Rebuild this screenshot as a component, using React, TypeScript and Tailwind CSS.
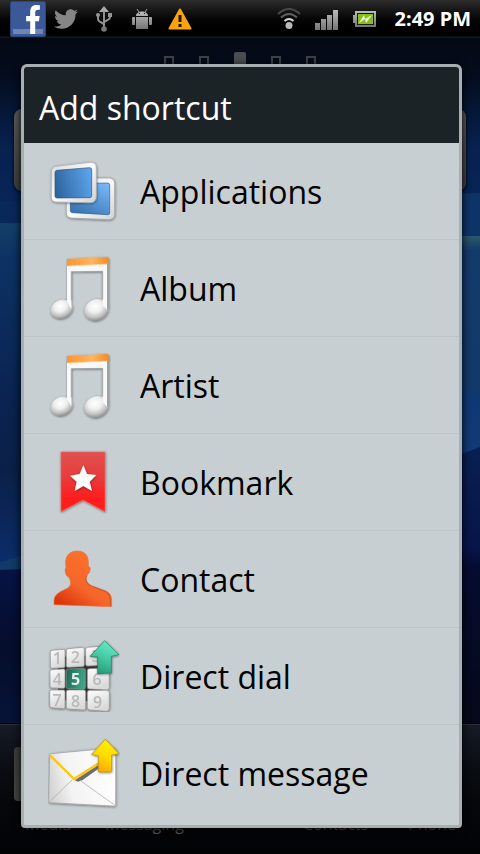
import type { ReactNode } from "react";
import { FaFacebookF, FaTwitter } from "react-icons/fa";

function Wallpaper() {
  return (
    <svg className="absolute inset-0 h-full w-full" viewBox="0 0 480 854" preserveAspectRatio="none" aria-hidden="true">
      <defs>
        <linearGradient id="sky" x1="0" y1="0" x2="0" y2="1">
          <stop offset="0" stopColor="#020509" />
          <stop offset="0.09" stopColor="#040d1e" />
          <stop offset="0.17" stopColor="#07214f" />
          <stop offset="0.26" stopColor="#08265a" />
        </linearGradient>
        <linearGradient id="band" x1="0" y1="0" x2="0" y2="1">
          <stop offset="0" stopColor="#143f66" />
          <stop offset="0.1" stopColor="#0c3264" />
          <stop offset="0.5" stopColor="#0a2350" />
          <stop offset="0.7" stopColor="#0a2048" />
          <stop offset="1" stopColor="#0a2f6e" />
        </linearGradient>
        <linearGradient id="bandRight" x1="0" y1="0" x2="0" y2="1">
          <stop offset="0" stopColor="#2c5868" />
          <stop offset="0.06" stopColor="#123a6c" />
          <stop offset="0.6" stopColor="#123968" />
          <stop offset="0.7" stopColor="#0e3875" />
          <stop offset="1" stopColor="#153a72" />
        </linearGradient>
        <linearGradient id="deep" x1="0" y1="0" x2="0" y2="1">
          <stop offset="0" stopColor="#07164c" />
          <stop offset="0.35" stopColor="#061242" />
          <stop offset="0.65" stopColor="#050e2b" />
          <stop offset="1" stopColor="#06133a" />
        </linearGradient>
        <linearGradient id="deepRight" x1="0" y1="0" x2="0" y2="1">
          <stop offset="0" stopColor="#082052" />
          <stop offset="0.36" stopColor="#08144a" />
          <stop offset="0.42" stopColor="#060c30" />
          <stop offset="1" stopColor="#050818" />
        </linearGradient>
      </defs>
      <rect width="480" height="854" fill="url(#sky)" />
      <path d="M0 201l240 3v30H0z" fill="#09285a" />
      <path d="M0 223l240 3v350H0z" fill="url(#band)" />
      <path d="M240 200l240-7v45H240z" fill="#0c3468" />
      <path d="M240 236h240v240H240z" fill="url(#bandRight)" />
      <path d="M0 562q10-2 30-10l210-60v100H0z" fill="#113a68" />
      <path d="M0 570l24-1q100-8 216-70v230H0z" fill="url(#deep)" />
      <path d="M240 500q130-8 240-53v283H240z" fill="url(#deepRight)" />
    </svg>
  );
}

function HomeScreen() {
  return (
    <div className="absolute inset-0 overflow-hidden" aria-hidden="true">
      <Wallpaper />
      <div className="absolute inset-x-0 top-[52px] flex h-6 justify-center gap-[25px]">
        <span className="mt-1 w-[10px] border-2 border-[#3e4144]" />
        <span className="mt-1 w-[10px] border-2 border-[#3e4144]" />
        <span className="w-3 rounded-t-xs bg-[#4b4d50]" />
        <span className="mt-1 w-[10px] border-2 border-[#3e4144]" />
        <span className="mt-1 w-[10px] border-2 border-[#3e4144]" />
      </div>
      <div className="absolute inset-x-[14px] top-[109px] h-[82px] rounded-lg bg-linear-to-b from-[#5a5a5a] to-[#3f3f3f] shadow-[0_1px_3px_#000]" />
      <div className="absolute inset-x-0 bottom-0 h-[131px] border-t border-black bg-linear-to-b from-[#161b26] via-[#080b0f] via-40% to-[#020305]">
        <div className="h-px bg-[#2d3034]" />
        <div className="absolute top-[23px] left-[14px] h-[54px] w-12 rounded-sm bg-linear-to-b from-[#3d3d3d] to-[#454545]" />
        <div className="absolute inset-x-0 top-[88px] flex pr-6 pl-[25px] text-base leading-6 text-[#606366]">
          <span>Media</span>
          <span className="ml-[34px]">Messaging</span>
          <span className="ml-auto">Contacts</span>
          <span className="ml-10">Phone</span>
        </div>
      </div>
    </div>
  );
}

function Slot({ children }: { children: ReactNode }) {
  return <span className="flex w-[38px] shrink-0 items-center justify-center">{children}</span>;
}

function StatusBar() {
  return (
    <header className="relative flex h-[38px] items-center bg-linear-to-b from-[#2c2c2c] via-black via-88% to-[#1d1d1d] px-[9px]">
      <svg width="0" height="0" className="absolute" aria-hidden="true">
        <defs>
          <linearGradient id="grey" x1="0" y1="0" x2="0" y2="1">
            <stop offset="0" stopColor="#bcbcbc" />
            <stop offset="1" stopColor="#747474" />
          </linearGradient>
        </defs>
      </svg>
      <Slot>
        <span className="relative flex size-9 items-end justify-end rounded-xs border border-[#2d4679] bg-[#3b5998] pr-1 pb-[2px]">
          <span className="absolute inset-x-[2px] bottom-[2px] h-[5px] bg-[#6d84b4]" />
          <FaFacebookF className="relative h-[29px] w-[16px] text-white" preserveAspectRatio="none" />
        </span>
      </Slot>
      <Slot>
        <FaTwitter className="size-6 text-[#858585]" />
      </Slot>
      <Slot>
        <svg width="24" height="26" viewBox="0 0 24 26">
          <path d="M12 0l5 6H7z" fill="#a8a8a8" />
          <path d="M12 5v17M12 19c0-3-6-2-6-6V9M12 17c0-3 6-2 6-6V8" fill="none" stroke="#8f8f8f" strokeWidth="2" />
          <circle cx="6" cy="9" r="2" fill="#969696" />
          <path d="M16 7h4v4h-4z" fill="#969696" />
          <circle cx="12" cy="23" r="2.8" fill="#777" />
        </svg>
      </Slot>
      <Slot>
        <svg width="20" height="20" viewBox="0 0 20 20">
          <path d="M4 7C4 1 16 1 16 7z M4 8h12v12H4z M0 9q0-1 1-1h2v8H1q-1 0-1-1z M17 8h2q1 0 1 1v6q0 1-1 1h-2z" fill="url(#grey)" />
          <path d="M5 0l2 3M15 0l-2 3" stroke="#a5a5a5" strokeWidth="1" />
          <path d="M7 4h1v1H7z M12 4h1v1h-1z" fill="#111" />
        </svg>
      </Slot>
      <Slot>
        <svg width="24" height="22" viewBox="0 0 24 22">
          <path d="M12 1.500L22.500 20.500H1.500z" fill="#ffa30c" stroke="#ffa30c" strokeWidth="2" strokeLinejoin="round" />
          <path d="M10.500 7h3v7h-3z M10.500 16h3v3h-3z" fill="#1a1a1a" />
        </svg>
      </Slot>
      <span className="grow" />
      <Slot>
        <svg width="24" height="22" viewBox="0 0 24 22" fill="none">
          <path d="M1 6q11-10 22 0" stroke="#484848" strokeWidth="2" />
          <path d="M4 9.500q8-7 16 0" stroke="#606060" strokeWidth="2" />
          <path d="M7.500 13q4.500-4 9 0" stroke="#d8d8d8" strokeWidth="2" />
          <circle cx="12" cy="17.500" r="3.500" fill="#b8b8b8" />
        </svg>
      </Slot>
      <Slot>
        <svg width="24" height="22" viewBox="0 0 24 22">
          <path d="M0 15h5v7H0z M6 11h5v11H6z M12 7h5v15h-5z M18 2h5v20h-5z" fill="url(#grey)" />
        </svg>
      </Slot>
      <Slot>
        <svg width="24" height="16" viewBox="0 0 24 16">
          <path d="M0 4h3v8H0z M2 0h21v16H2z" fill="url(#grey)" />
          <path d="M4 2h17v12H4z" fill="#171d0c" />
          <path d="M5 3h15v10H5z" fill="#86bd1d" />
          <path d="M6 12l5-8 1 4 7-4-6 8-1-4z" fill="#eff8d8" />
        </svg>
      </Slot>
      <time className="ml-[11px] font-['Noto_Sans',sans-serif] text-xl leading-6 font-bold whitespace-nowrap text-white">2:49 PM</time>
    </header>
  );
}

function Icon({ children }: { children: ReactNode }) {
  return (
    <svg className="size-[72px] shrink-0" viewBox="0 0 216 216" aria-hidden="true">
      {children}
    </svg>
  );
}

function IconDefs() {
  return (
    <svg width="0" height="0" className="absolute" aria-hidden="true">
      <defs>
        <filter id="shade" x="-20%" y="-20%" width="140%" height="140%">
          <feDropShadow dx="1" dy="2" stdDeviation="3" floodColor="#000" floodOpacity="0.5" />
        </filter>
        <linearGradient id="frame" x1="0" y1="0" x2="1" y2="1">
          <stop offset="0" stopColor="#dadada" />
          <stop offset="0.5" stopColor="#fafafa" />
          <stop offset="1" stopColor="#d2d2d2" />
        </linearGradient>
        <linearGradient id="screenFront" x1="0" y1="0.6" x2="1" y2="0.4">
          <stop offset="0" stopColor="#2f659f" />
          <stop offset="1" stopColor="#5ba3ec" />
        </linearGradient>
        <linearGradient id="screenBack" x1="0.9" y1="0" x2="0.2" y2="1">
          <stop offset="0" stopColor="#78b9fb" />
          <stop offset="1" stopColor="#3872af" />
        </linearGradient>
        <linearGradient id="orangeBar" x1="0" y1="0" x2="1" y2="0">
          <stop offset="0" stopColor="#ff9430" />
          <stop offset="0.6" stopColor="#ffb45f" />
          <stop offset="1" stopColor="#f08d28" />
        </linearGradient>
        <radialGradient id="ball" cx="0.5" cy="0.32" r="0.7">
          <stop offset="0" stopColor="#fff" />
          <stop offset="0.4" stopColor="#efefef" />
          <stop offset="0.75" stopColor="#bdbdbd" />
          <stop offset="1" stopColor="#858585" />
        </radialGradient>
        <linearGradient id="ribbon" x1="0" y1="0" x2="0" y2="1">
          <stop offset="0" stopColor="#e0504f" />
          <stop offset="0.45" stopColor="#ea3a3a" />
          <stop offset="0.8" stopColor="#ff1b1b" />
          <stop offset="1" stopColor="#ff2222" />
        </linearGradient>
        <linearGradient id="person" x1="0.7" y1="0.3" x2="0.2" y2="1">
          <stop offset="0" stopColor="#fb6e2c" />
          <stop offset="0.5" stopColor="#f5652a" />
          <stop offset="1" stopColor="#dc3208" />
        </linearGradient>
        <linearGradient id="key" x1="0" y1="0" x2="0.4" y2="1">
          <stop offset="0" stopColor="#fdfdfd" />
          <stop offset="1" stopColor="#d9d9d9" />
        </linearGradient>
        <linearGradient id="greenKey" x1="0" y1="0.4" x2="1" y2="0.6">
          <stop offset="0" stopColor="#1d6d58" />
          <stop offset="1" stopColor="#41a88a" />
        </linearGradient>
        <linearGradient id="greenArrow" x1="0.7" y1="0" x2="0.3" y2="1">
          <stop offset="0" stopColor="#64efc8" />
          <stop offset="0.5" stopColor="#48c9a5" />
          <stop offset="1" stopColor="#239a78" />
        </linearGradient>
        <linearGradient id="yellowArrow" x1="0.7" y1="0" x2="0.3" y2="1">
          <stop offset="0" stopColor="#fff000" />
          <stop offset="0.5" stopColor="#ffdc00" />
          <stop offset="1" stopColor="#f7a600" />
        </linearGradient>
        <linearGradient id="paper" x1="0" y1="0.6" x2="1" y2="0.4">
          <stop offset="0" stopColor="#d3d3d3" />
          <stop offset="0.3" stopColor="#f3f3f3" />
          <stop offset="1" stopColor="#fff" />
        </linearGradient>
      </defs>
    </svg>
  );
}

function ApplicationsIcon() {
  return (
    <Icon>
      <path d="M70 69L184 69Q200 71 200 87V178Q199 194 182 194L70 189Q55 187 55 173V84Q55 70 70 69Z" fill="url(#frame)" stroke="#959b9e" strokeWidth="2" filter="url(#shade)" />
      <path d="M67 86L179 84Q185 84 185 90V174Q185 179 179 179L73 173Q67 172 67 167Z" fill="url(#screenBack)" stroke="#2e5c8c" strokeWidth="2" />
      <path d="M24 34L126 22Q144 21 145 38V126Q144 142 128 143L24 141Q10 140 10 126V51Q10 36 24 34Z" fill="url(#frame)" stroke="#a5a9ab" strokeWidth="2" filter="url(#shade)" />
      <path d="M26 46L125 38Q131 38 131 44V122Q131 128 125 128L27 129Q21 129 21 123V53Q21 47 26 46Z" fill="url(#screenFront)" stroke="#2b4e72" strokeWidth="2" />
    </Icon>
  );
}

function NoteIcon() {
  return (
    <Icon>
      <g filter="url(#shade)">
        <ellipse cx="41" cy="172" rx="34" ry="28" fill="url(#ball)" transform="rotate(-22 41 172)" />
        <ellipse cx="145" cy="174" rx="37" ry="32" fill="url(#ball)" transform="rotate(-20 145 174)" />
        <path d="M57 40L180 34V176L164 160V58L70 59V172L57 150Z" fill="#f9f9f9" />
        <path d="M177 18L182 20V168L177 178Z" fill="#9da1a3" />
        <path d="M57 21L178 15L182 19V36L57 42Z" fill="url(#orangeBar)" />
        <path d="M57 42L178 36" stroke="#ffd091" strokeWidth="2" />
        <path d="M70 145V59L164 58V142" fill="none" stroke="#8f9496" strokeWidth="2" />
      </g>
    </Icon>
  );
}

function BookmarkIcon() {
  return (
    <Icon>
      <path d="M39 18H171V197L105 162L39 197Z" fill="url(#ribbon)" stroke="#f06a5c" strokeWidth="2" filter="url(#shade)" />
      <path d="M106 57L117 84L145 87L125 107L132 135L106 120L80 135L86 107L66 89L95 84Z" fill="#fdfdfd" filter="url(#shade)" />
    </Icon>
  );
}

function ContactIcon() {
  return (
    <Icon>
      <path d="M88 24C66 24 52 38 53 60L54 74Q49 78 53 92Q55 101 62 102Q68 110 68 121Q68 132 54 138C36 146 18 154 18 174V185L191 191V168Q190 151 174 144L130 128Q114 120 114 104Q117 99 119 94Q126 92 127 76Q126 70 121 71V54C120 34 106 24 88 24Z" fill="url(#person)" stroke="#e27545" strokeWidth="2" />
      <path d="M115 98Q109 120 130 129L172 145Q188 151 188 188" fill="none" stroke="#a94b24" strokeWidth="2" />
    </Icon>
  );
}

const keys = [
  { d: "M12 31L46 28Q51 28 51 33V78Q51 83 46 83L12 85Q7 85 7 80V36Q7 31 12 31Z", n: "1", x: 28, y: 73 },
  { d: "M61 26L103 22Q109 22 109 28V74Q109 80 103 80L61 82Q55 82 55 77V32Q55 27 61 26Z", n: "2", x: 82, y: 69 },
  { d: "M119 22L166 18Q174 18 174 26V68Q174 76 166 76L119 78Q113 78 113 72V28Q113 23 119 22Z", n: "3", x: 144, y: 66 },
  { d: "M12 89L46 87Q51 87 51 92V140Q51 145 46 145L12 144Q6 144 6 139V94Q6 89 12 89Z", n: "4", x: 28, y: 134 },
  { d: "M61 87L106 85Q112 85 112 91V142Q112 148 106 148L61 146Q55 146 55 140V93Q55 87 61 87Z", n: "5", x: 83, y: 134 },
  { d: "M124 86L176 84Q184 84 184 92V142Q184 150 176 150L124 147Q118 147 118 141V92Q118 86 124 86Z", n: "6", x: 147, y: 135 },
  { d: "M11 150H46Q51 150 51 155V201Q51 206 46 206L11 203Q5 202 5 197V155Q5 150 11 150Z", n: "7", x: 27, y: 197 },
  { d: "M61 150H107Q113 150 113 156V204Q113 210 107 210L61 207Q55 206 55 201V156Q55 150 61 150Z", n: "8", x: 83, y: 201 },
  { d: "M125 151H176Q184 151 184 159V205Q183 214 175 214L125 210Q118 209 118 203V158Q118 151 125 151Z", n: "9", x: 149, y: 204 },
];

function DialIcon() {
  return (
    <Icon>
      <path d="M30 50L160 45L165 185L30 180Z" fill="#3a3a3a" />
      <g filter="url(#shade)">
        {keys.map((key) => (
          <g key={key.n}>
            <path d={key.d} fill={key.n === "5" ? "url(#greenKey)" : "url(#key)"} stroke="#8b8b8b" strokeWidth="2" />
            <text x={key.x} y={key.y} textAnchor="middle" fontSize="48" fontWeight={key.n === "5" ? 700 : 600} fill={key.n === "5" ? "#e6efec" : "#b9b9b9"}>
              {key.n}
            </text>
          </g>
        ))}
      </g>
      <path d="M170 2L213 44L190 49V99L149 101V51L126 49Z" fill="url(#greenArrow)" stroke="#23775f" strokeWidth="2" strokeLinejoin="round" filter="url(#shade)" />
    </Icon>
  );
}

function MessageIcon() {
  return (
    <Icon>
      <path d="M10 50L140 38L198 34Q203 34 203 40V203Q203 207 198 207L6 197Q1 197 2 191L5 55Q6 51 10 50Z" fill="url(#paper)" stroke="#9a9fa1" strokeWidth="2" filter="url(#shade)" />
      <path d="M80 130L152 83L160 89L104 129L90 134Z" fill="#4b4b4b" opacity="0.8" />
      <path d="M5 194L73 128M96 130L201 205" stroke="#a5a5a5" strokeWidth="2" />
      <path d="M7 56L78 126L158 75" fill="none" stroke="#ffc60b" strokeWidth="7" />
      <path d="M172 7L213 50L191 54V103Q191 105 188 105H154Q151 105 151 102V57L131 52Z" fill="url(#yellowArrow)" stroke="#b78a10" strokeWidth="2" strokeLinejoin="round" filter="url(#shade)" />
    </Icon>
  );
}

const shortcuts = [
  { label: "Applications", icon: <ApplicationsIcon /> },
  { label: "Album", icon: <NoteIcon /> },
  { label: "Artist", icon: <NoteIcon /> },
  { label: "Bookmark", icon: <BookmarkIcon /> },
  { label: "Contact", icon: <ContactIcon /> },
  { label: "Direct dial", icon: <DialIcon /> },
  { label: "Direct message", icon: <MessageIcon /> },
];

export default function App() {
  return (
    <div className="relative flex min-h-screen flex-col bg-[#020509] font-['Open_Sans','Noto_Sans',sans-serif]">
      <HomeScreen />
      <IconDefs />
      <StatusBar />
      <main className="relative pt-[26px] pr-[18px] pb-[26px] pl-[21px]">
        <section
          role="dialog"
          aria-labelledby="dialog-title"
          className="overflow-hidden rounded-t-md rounded-b-sm border-3 border-[#a7afb3] bg-[#c8cfd2] shadow-[0_2px_8px_#000]"
        >
          <h1 id="dialog-title" className="flex h-[76px] items-center bg-[#1c2326] px-[15px] pt-[6px] text-[32px] leading-10 text-white">
            Add shortcut
          </h1>
          <ul className="divide-y divide-[#bec4c6] pb-1">
            {shortcuts.map((item) => (
              <li key={item.label}>
                <button type="button" className="flex h-24 w-full items-center gap-5 pl-6 text-left text-[32px] leading-10 text-black">
                  {item.icon}
                  <span className="pt-[2px]">{item.label}</span>
                </button>
              </li>
            ))}
          </ul>
        </section>
      </main>
    </div>
  );
}
